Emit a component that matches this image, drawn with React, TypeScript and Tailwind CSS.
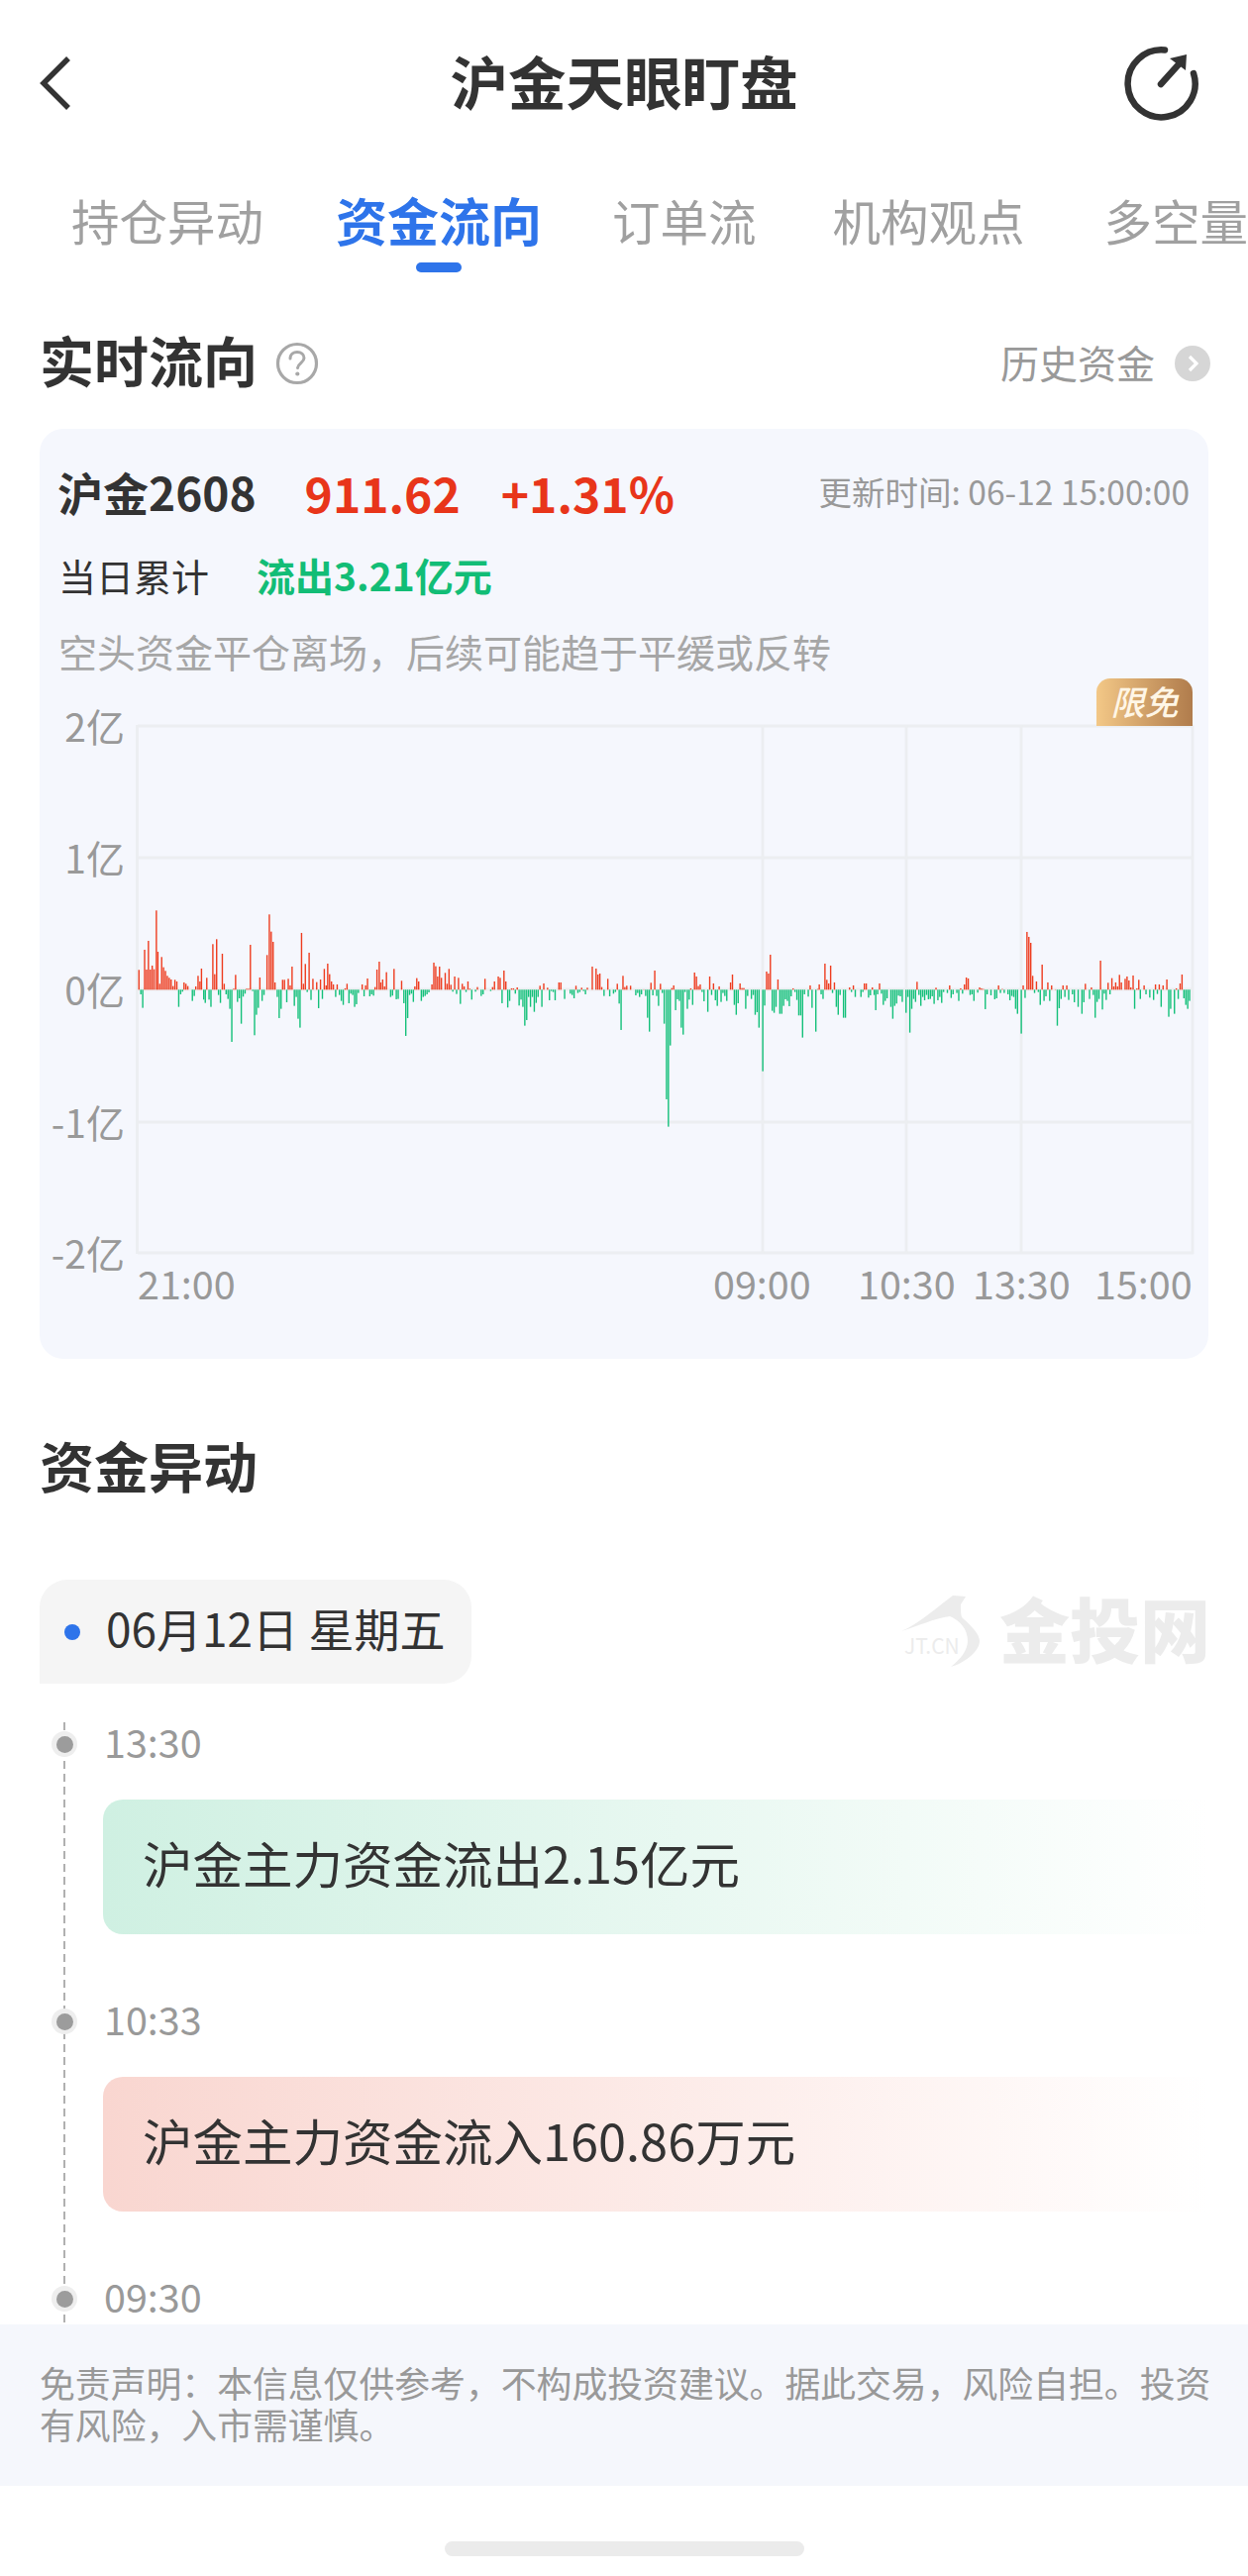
const redA = [262,298,277,237,282,297,287,210,292,297,297,285,302,296,308,118,312,243,317,340,322,259,327,290,332,301,337,316,342,322,347,327,352,347,357,328,362,333,381,336,386,340,391,347,412,348,418,316,423,333,427,294,441,322,457,220,462,311,467,205,482,249,487,340,512,355,517,313,546,355,551,355,556,222,581,321,600,253,606,130,611,182,616,213,621,336,641,328,646,328,656,325,661,345,666,288,691,186,696,340,701,280,711,246,721,325,731,335,741,327,751,295,756,345,760,279,765,311,770,333,775,342,785,342,806,354,811,340,851,342,860,345,865,324,885,350,890,297,896,273,900,336,905,327,910,348,915,305,935,295,955,331,990,348,995,323,1000,333,1035,342,1040,276,1045,287,1050,318,1055,288,1060,322,1070,307,1075,340,1080,295,1085,343,1095,318,1105,322,1115,340,1120,348,1130,333,1135,355,1155,350,1175,325,1195,350,1200,333,1210,318,1215,322,1225,300,1230,333,1245,354,1250,354,1260,351,1320,346,1330,339,1340,352,1370,336,1375,336,1415,346,1430,352,1445,352,1458,288,1468,294,1473,312,1478,309,1483,350,1499,325,1524,340,1539,316,1544,350,1549,346,1559,346];
const greenA = [267,372,272,413,367,410,372,372,377,364,403,392,408,377,433,388,437,398,447,388,452,410,472,374,477,398,492,372,497,386,502,416,507,516,522,395,527,384,532,461,537,379,542,370,562,362,567,496,572,434,577,413,587,392,592,374,627,380,632,444,637,416,652,396,672,407,677,380,682,446,687,473,706,365,716,389,736,414,746,386,781,380,791,374,796,392,801,404,816,399,821,370,826,374,831,410,836,402,841,368,856,378,871,378,876,372,881,376,926,380,931,376,941,387,946,386,961,399,966,498,971,444,976,374,981,370,986,395,1007,392,1012,380,1017,377,1022,372,1027,366,1090,364,1100,371,1110,401,1125,365,1140,388,1150,364,1165,377,1170,372,1190,362,1220,399,1235,412,1240,392,1255,370,1265,406,1270,388,1275,410,1280,467,1285,450,1290,380,1295,410,1300,380,1305,425,1310,398,1315,380,1325,410,1345,390,1350,362,1355,365,1360,390,1385,386,1400,370,1405,374,1410,384,1420,368,1425,365,1435,362,1440,372,1489,377,1504,378,1514,370,1519,365,1529,400,1534,480];
const redB = [26,357,45,337,55,300,70,340,100,353,105,345,150,354,160,306,165,318,170,347,175,342,200,318,210,339,225,348,255,336,260,312,280,339,285,353,290,353,350,303,355,309,360,252,380,327,420,354,465,345,485,356,489,342,504,279,509,328,514,339,519,285,529,336,569,351,579,345,608,339,613,339,629,351,648,339,747,334,797,352,833,345,862,354,872,342,877,321,882,324,912,351,917,354,922,356,962,345,972,356,1027,345,1037,183,1042,198,1047,216,1052,316,1062,333,1077,282,1092,336,1102,345,1112,357,1132,345,1142,345,1191,340,1207,351,1231,270,1251,337,1261,323,1266,348,1271,336,1276,348,1281,313,1286,336,1296,325,1301,318,1306,330,1311,351,1317,315,1327,354,1332,328,1346,345,1376,342,1386,342,1396,345,1406,327,1431,354,1441,339,1446,312];
const greenB = [5,375,10,368,15,380,20,372,31,377,36,443,41,485,50,375,60,377,65,407,75,368,80,461,86,690,91,773,96,527,110,420,115,387,120,392,125,473,130,494,135,365,141,416,146,388,155,404,180,365,185,393,195,425,205,374,215,390,220,407,230,395,235,368,240,377,245,392,265,404,270,434,275,399,295,416,300,377,310,386,315,374,320,434,325,426,330,473,340,605,345,406,365,422,370,428,375,410,385,431,390,431,395,407,400,387,405,392,410,408,415,378,425,365,430,389,435,436,440,436,445,503,450,372,460,379,470,413,480,485,494,372,499,386,524,368,534,410,539,434,544,374,553,443,558,443,574,365,584,380,599,380,604,365,619,382,624,375,634,374,638,420,643,372,653,370,658,404,663,392,668,384,678,410,683,446,688,407,693,400,698,376,703,378,708,395,718,428,723,380,728,488,733,416,738,386,743,395,752,374,757,407,762,380,767,390,772,374,777,387,782,386,787,378,792,401,802,390,807,380,812,398,817,365,827,368,837,383,842,372,852,368,857,392,867,370,887,374,892,372,897,392,907,367,927,417,932,372,942,375,952,387,957,384,967,368,977,368,987,372,992,390,997,377,1002,380,1007,416,1012,431,1022,491,1032,383,1057,368,1067,365,1072,404,1082,392,1087,378,1097,392,1117,467,1122,414,1127,386,1137,380,1147,389,1157,372,1162,396,1172,410,1182,431,1187,396,1202,386,1212,374,1217,443,1222,395,1227,386,1236,418,1241,370,1246,389,1256,372,1321,416,1336,386,1351,372,1361,382,1371,389,1381,371,1391,410,1411,440,1416,416,1426,431,1436,386,1451,384,1456,404,1461,416,1466,392];

const ZERO = 999.3;

// pairs are [x, y] read off the reference, x in 2.613x crop space and y in 3x
function Bars({ data, left, color }: { data: number[]; left: number; color: string }) {
  const bars = [];
  for (let i = 0; i < data.length; i += 2) {
    const x = left + data[i] / 2.613;
    const h = Math.abs(data[i + 1] - 358) / 3;
    const up = data[i + 1] < 358;
    bars.push(<rect key={i} x={x - 0.7} y={up ? ZERO - h : ZERO} width={1.4} height={h} fill={color} />);
  }
  return <>{bars}</>;
}

function Chart() {
  const rows = [
    { y: 733, label: "2亿" },
    { y: 866, label: "1亿" },
    { y: 999, label: "0亿" },
    { y: 1133, label: "-1亿" },
    { y: 1265, label: "-2亿" },
  ];
  const vlines = [138.5, 770, 915, 1031, 1204];
  const ticks = [
    { x: 139, label: "21:00" },
    { x: 720, label: "09:00" },
    { x: 866, label: "10:30" },
    { x: 982, label: "13:30" },
    { x: 1105, label: "15:00" },
  ];
  return (
    <svg width={1180} height={645} viewBox="40 685 1180 645" className="block">
      {rows.map((r) => (
        <line key={r.y} x1={139} x2={1205} y1={r.y} y2={r.y} stroke="#eceef1" strokeWidth={2.8} />
      ))}
      {vlines.map((x) => (
        <line key={x} x1={x} x2={x} y1={732} y2={1266} stroke="#eceef1" strokeWidth={2.8} />
      ))}
      {rows.map((r) => (
        <text key={r.label} x={126} y={r.y + 16} textAnchor="end" fontSize={39} fill="#999999">
          {r.label}
        </text>
      ))}
      {ticks.map((t) => (
        <text key={t.label} x={t.x} y={1312} fontSize={39.5} fill="#999999">
          {t.label}
        </text>
      ))}
      <Bars data={redA} left={40} color="#ee3d20" />
      <Bars data={greenA} left={40} color="#14c07a" />
      <Bars data={redB} left={640} color="#ee3d20" />
      <Bars data={greenB} left={640} color="#14c07a" />
    </svg>
  );
}

function TimelineItem({ time, text, tone }: { time: string; text?: string; tone?: "up" | "down" }) {
  return (
    <div>
      <div className="relative flex h-[44px] items-center pl-[52px]">
        <div className="flex h-[26px] w-[26px] items-center justify-center rounded-full bg-[#eeeeee]">
          <div className="h-[17px] w-[17px] rounded-full bg-[#9c9c9c]"></div>
        </div>
        <span className="mb-[6px] ml-[27px] text-[39.5px] leading-[38px] text-[#999999]">{time}</span>
      </div>
      {text && (
        <div
          className={
            "mt-[34px] mb-[66px] ml-[104px] flex h-[136px] w-[1116px] items-center rounded-l-[20px] pb-[9px] pl-[40px] text-[50.5px] text-[#333333] " +
            (tone === "down"
              ? "bg-gradient-to-r from-[#cff0e2] to-[#ffffff]"
              : "bg-gradient-to-r from-[#f9d6d0] to-[#ffffff]")
          }
        >
          {text}
        </div>
      )}
    </div>
  );
}

export default function App() {
  const tabs = [
    { label: "持仓异动", cls: "ml-0" },
    { label: "资金流向", cls: "ml-[73px]", active: true },
    { label: "订单流", cls: "ml-[71px]" },
    { label: "机构观点", cls: "ml-[77px]" },
    { label: "多空量", cls: "ml-[80px]" },
  ];
  return (
    <div className="flex h-[2601px] w-[1260px] flex-col overflow-hidden bg-white font-['Noto_Sans_CJK_SC','Noto_Sans',sans-serif]">
      {/* header */}
      <div className="grid h-[168px] grid-cols-[150px_1fr_150px] items-center">
        <svg width={34} height={56} viewBox="0 0 34 56" className="ml-[39px]">
          <path d="M30 3 L5 28 L30 53" fill="none" stroke="#333333" strokeWidth={5.5} strokeLinejoin="miter" />
        </svg>
        <div className="pb-[6px] text-center text-[58.5px] leading-none font-bold text-[#333333]">沪金天眼盯盘</div>
        <svg width={80} height={80} viewBox="1133 46 80 80" className="ml-[23px]">
          <path d="M1176 52.5 A34 34 0 1 0 1205 76" fill="none" stroke="#333333" strokeWidth={6.5} strokeLinecap="round" />
          <path d="M1172 87 L1190 67" fill="none" stroke="#333333" strokeWidth={6.5} strokeLinecap="round" />
          <path d="M1198 57 L1181 61 L1197 73 Z" fill="#333333" />
        </svg>
      </div>

      {/* tabs */}
      <div className="flex h-[107px] items-start overflow-hidden pt-[22px] pl-[72px] whitespace-nowrap">
        {tabs.map((t) => (
          <div key={t.label} className={"flex shrink-0 flex-col items-center " + t.cls}>
            <span
              className={
                t.active
                  ? "text-[52px] leading-[64px] font-bold text-[#2e74ea]"
                  : "text-[48.5px] leading-[64px] text-[#a0a0a0]"
              }
            >
              {t.label}
            </span>
            {t.active && <div className="mt-[11px] h-[10px] w-[46px] rounded-[5px] bg-[#2e74ea]"></div>}
          </div>
        ))}
      </div>

      {/* realtime title */}
      <div className="mt-[65px] flex h-[54px] items-center justify-between pr-[38px] pl-[40px]">
        <div className="flex items-center">
          <span className="mb-[9px] text-[55px] leading-none font-bold text-[#333333]">实时流向</span>
          <svg width={44} height={44} viewBox="0 0 44 44" className="ml-[18px]">
            <circle cx={22} cy={22} r={19.5} fill="none" stroke="#a8a8a8" strokeWidth={3.2} />
            <path d="M15 17 C15 12 19 10.5 22 10.5 C26 10.5 29 13 29 16.5 C29 21 23 21.5 22.5 26.5" fill="none" stroke="#a8a8a8" strokeWidth={3} strokeLinecap="round" />
            <circle cx={22.3} cy={32.5} r={2.1} fill="#a8a8a8" />
          </svg>
        </div>
        <div className="flex items-center">
          <span className="mb-[3px] text-[39px] leading-none text-[#999999]">历史资金</span>
          <div className="ml-[20px] flex h-[36px] w-[36px] items-center justify-center rounded-full bg-[#d6d6d6]">
            <svg width={12} height={18} viewBox="0 0 12 18">
              <path d="M3 2 L10 9 L3 16" fill="none" stroke="#ffffff" strokeWidth={3.2} />
            </svg>
          </div>
        </div>
      </div>

      {/* card */}
      <div className="mx-[40px] mt-[39px] h-[939px] w-[1180px] shrink-0 rounded-[24px] bg-[#f5f7fd] pt-[40px]">
        <div className="flex h-[50px] items-center justify-between pr-[19px] pb-[3px] pl-[18px]">
          <div className="flex items-center">
            <span className="text-[46px] font-bold text-[#333333]">沪金2608</span>
            <span className="ml-[49px] text-[48px] font-bold text-[#e8351a]">911.62</span>
            <span className="ml-[41px] text-[48px] font-bold text-[#e8351a]">+1.31%</span>
          </div>
          <span className="text-[33.5px] text-[#999999]">更新时间: 06-12 15:00:00</span>
        </div>
        <div className="mt-[35px] flex h-[50px] items-center px-[19px] pb-[6px]">
          <span className="text-[38px] text-[#333333]">当日累计</span>
          <span className="ml-[48px] text-[39px] font-bold text-[#12bd76]">流出3.21亿元</span>
        </div>
        <div className="mt-[27px] flex h-[50px] items-center pb-[6px] pl-[19px] text-[39px] text-[#a6a6a6]">
          空头资金平仓离场，后续可能趋于平缓或反转
        </div>
        <div className="relative">
          <Chart />
          <div className="absolute top-0 right-[16px] flex h-[48px] w-[97px] items-center justify-center rounded-t-[14px] bg-gradient-to-r from-[#f3c887] to-[#b07c4c] pb-[2px] text-[34px] leading-none font-medium text-[#fff6e6] italic">
            限免
          </div>
        </div>
      </div>

      {/* capital events */}
      <div className="mt-[83px] flex h-[54px] items-center pb-[8px] pl-[40px] text-[55px] leading-none font-bold text-[#333333]">
        资金异动
      </div>

      <div className="mt-[86px] flex h-[105px] items-center justify-between pr-[38px] pl-[40px]">
        <div className="flex h-[105px] items-center rounded-tl-[28px] rounded-tr-[28px] rounded-br-[28px] bg-[#f5f5f5] pr-[27px] pl-[25px]">
          <div className="h-[16px] w-[16px] rounded-full bg-[#2e74ea]"></div>
          <span className="mb-[10px] ml-[26px] text-[46px] leading-none text-[#333333]">06月12日 星期五</span>
        </div>
        <div className="flex items-center">
          <svg width={82} height={76} viewBox="912 1610 82 76">
            <path d="M913 1647 C930 1640 950 1622 965 1611 L978 1612 L973 1620 C973 1626 973 1630 974 1633 C984 1642 992 1650 992 1657 C992 1668 975 1680 963 1683 C973 1675 980 1666 980 1657 C980 1645 972 1636 962 1632 C946 1634 930 1642 913 1647 Z" fill="#ececec" />
            <text x={916} y={1670} fontSize={21} fill="#ececec">JT.CN</text>
          </svg>
          <span className="mb-[10px] ml-[18px] text-[71px] leading-none font-black text-[#ececec]">金投网</span>
        </div>
      </div>

      {/* timeline */}
      <div className="relative mt-[29px] h-[618px] shrink-0 overflow-hidden pt-[10px]">
        <div className="absolute top-[10px] bottom-0 left-[64px] w-[1.5px] bg-[repeating-linear-gradient(to_bottom,#b0b0b0_0,#b0b0b0_8px,transparent_8px,transparent_13px)]"></div>
        <TimelineItem time="13:30" text="沪金主力资金流出2.15亿元" tone="down" />
        <TimelineItem time="10:33" text="沪金主力资金流入160.86万元" tone="up" />
        <TimelineItem time="09:30" />
      </div>

      {/* disclaimer */}
      <div className="h-[163px] shrink-0 bg-[#f5f7fc] pt-[37px] pr-[30px] pl-[40px] text-[35.85px] leading-[42px] text-[#999999]">
        免责声明：本信息仅供参考，不构成投资建议。据此交易，风险自担。投资有风险，入市需谨慎。
      </div>

      <div className="mx-auto mt-[56px] h-[15px] w-[363px] rounded-full bg-[#ebebeb]"></div>
    </div>
  );
}
